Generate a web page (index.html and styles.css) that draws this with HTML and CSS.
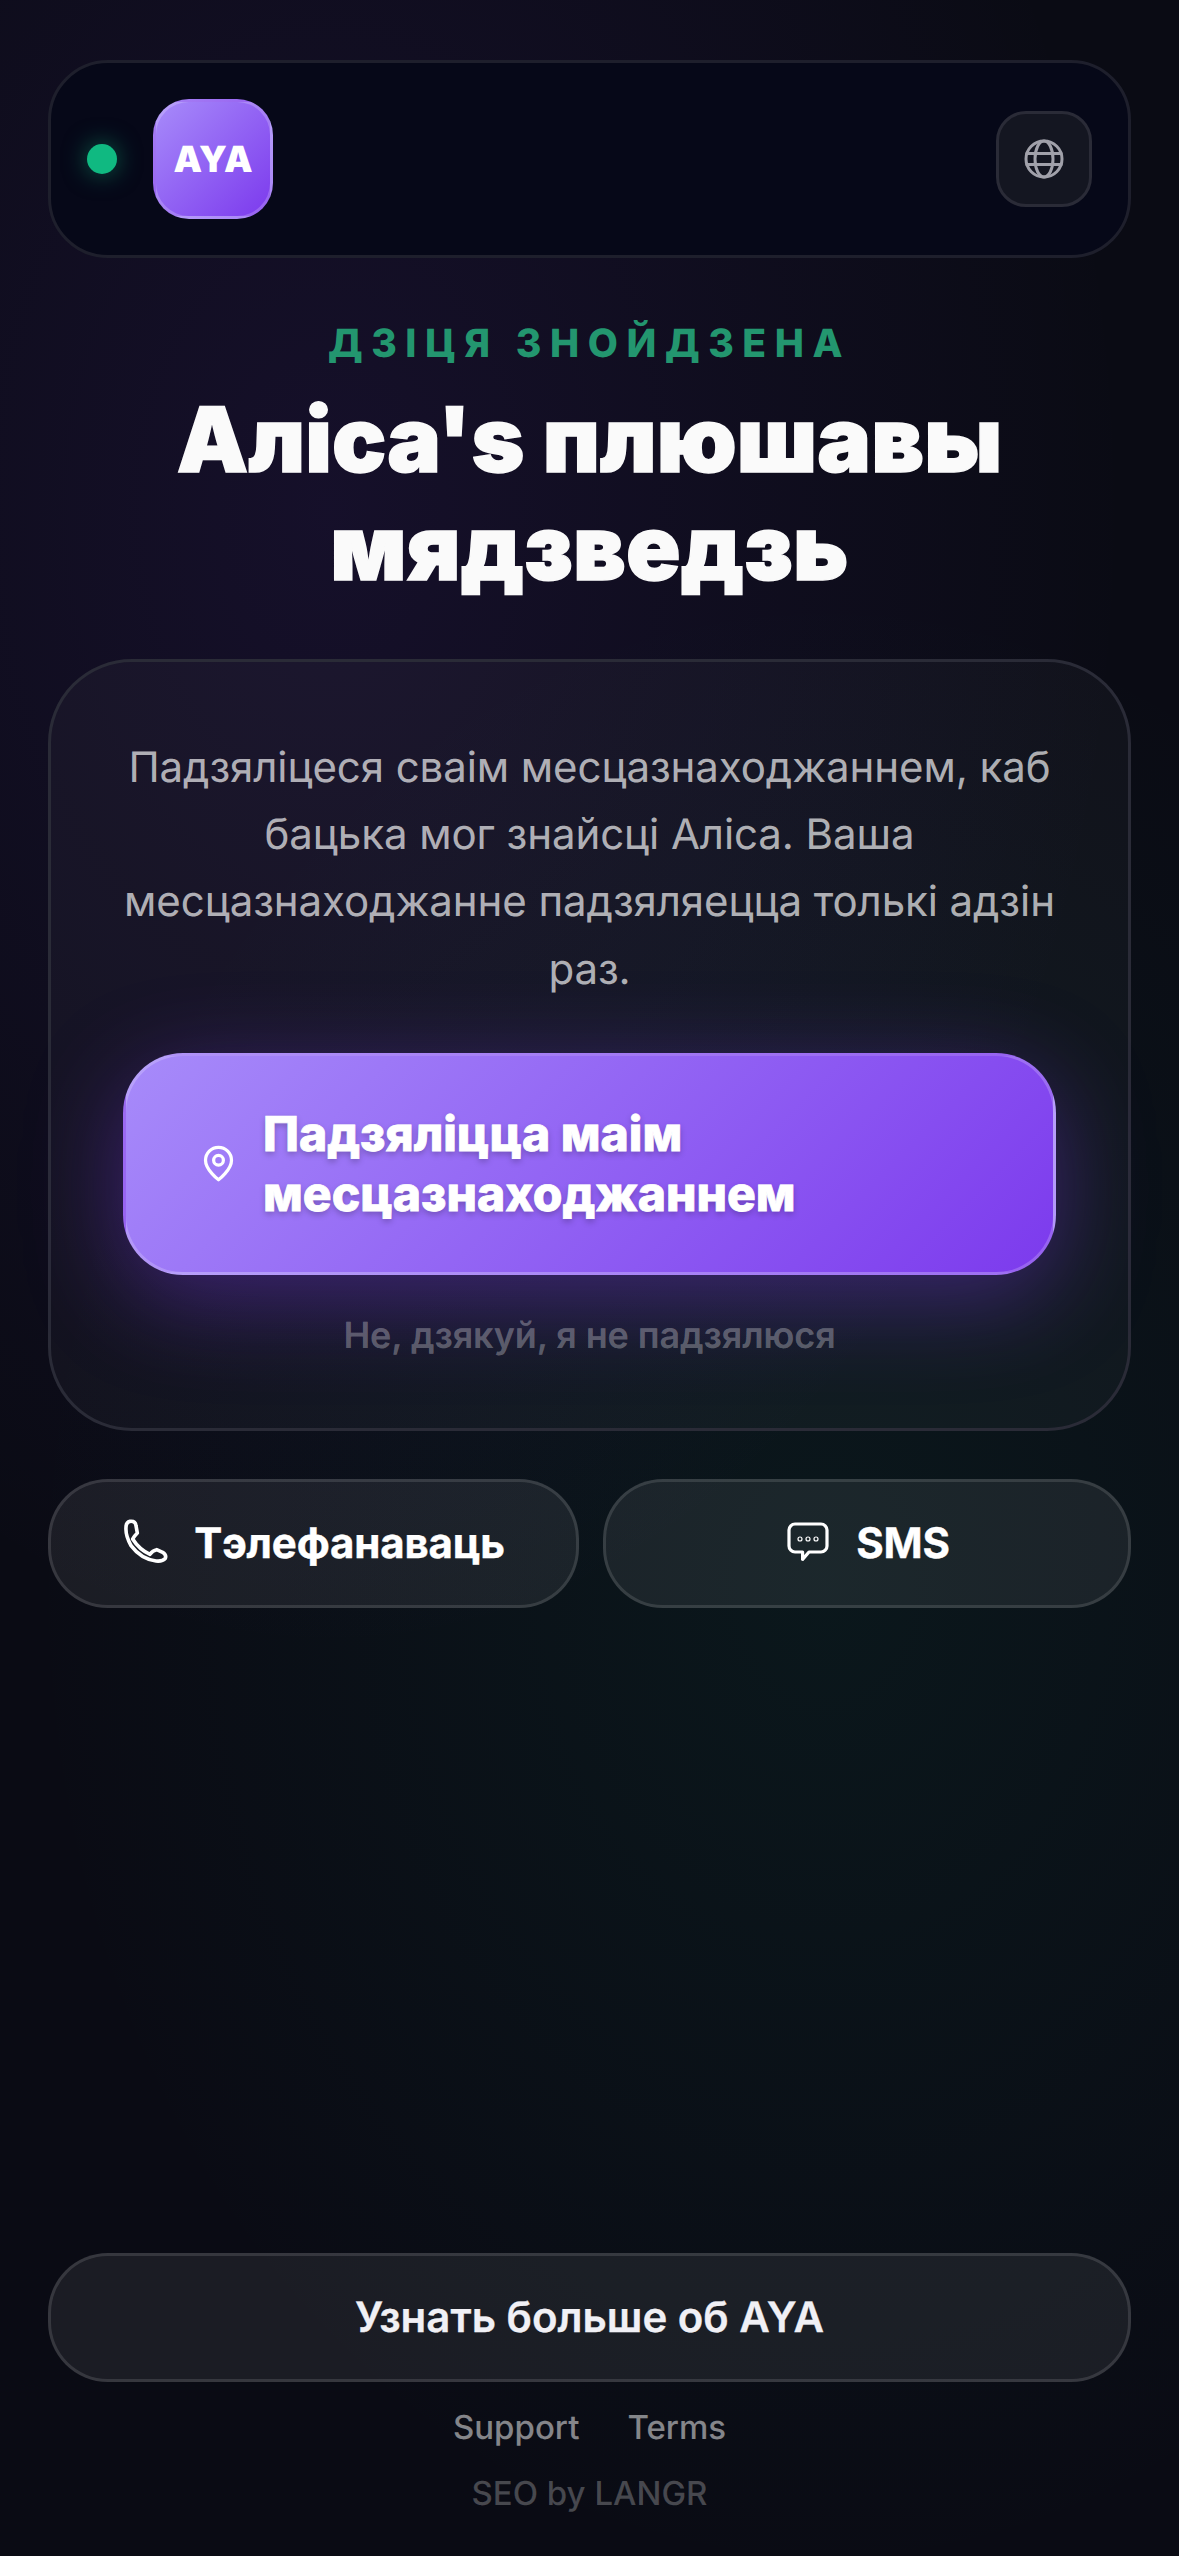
FILE: index.html
```html
<!DOCTYPE html>
<html lang="be">
<head>
    <meta charset="UTF-8">
    <meta name="viewport" content="width=device-width, initial-scale=1.0">
    <title>AYA</title>
    <link rel="stylesheet" href="styles.css">
</head>
<body>
    <div class="page">
        <header class="topbar">
            <div class="brand">
                <span class="status-dot"></span>
                <div class="logo">AYA</div>
            </div>
            <button class="lang-btn" aria-label="Language">
                <svg viewBox="0 0 24 24" class="globe-icon" fill="none" stroke="currentColor" stroke-width="1.5" stroke-linecap="round">
                    <circle cx="12" cy="12" r="9"/>
                    <ellipse cx="12" cy="12" rx="4.5" ry="9"/>
                    <path d="M3.4 9.3h17.2M3.4 14.7h17.2"/>
                </svg>
            </button>
        </header>

        <section class="hero">
            <p class="eyebrow">ДЗІЦЯ ЗНОЙДЗЕНА</p>
            <h1>Аліса's плюшавы мядзведзь</h1>
        </section>

        <section class="card">
            <p class="card-text">Падзяліцеся сваім месцазнаходжаннем, каб бацька мог знайсці Аліса. Ваша месцазнаходжанне падзяляецца толькі адзін раз.</p>
            <button class="share-btn">
                <svg viewBox="0 0 24 24" class="pin-icon" fill="none" stroke="currentColor" stroke-width="2" stroke-linecap="round" stroke-linejoin="round">
                    <path d="M20 10c0 6-8 12-8 12s-8-6-8-12a8 8 0 0 1 16 0Z"/>
                    <circle cx="12" cy="10" r="3"/>
                </svg>
                <span>Падзяліцца маім месцазнаходжаннем</span>
            </button>
            <button class="decline">Не, дзякуй, я не падзялюся</button>
        </section>

        <div class="contact-row">
            <button class="contact-btn">
                <svg viewBox="0 0 24 24" class="contact-icon" fill="none" stroke="currentColor" stroke-width="1.8" stroke-linecap="round" stroke-linejoin="round">
                    <path d="M4 1.17Q6.67.83 7 3.33L7.67 7Q6 8.67 5.33 10Q8.67 15.33 14 17.67Q15.33 15.67 17.33 15.33L20.33 16.67Q22.33 18 21.67 19.67Q20.33 21.33 17 21Q9.5 20 4.5 13.33Q1.67 8.33 2 4.17Q2 1.67 4 1.17Z"/>
                </svg>
                <span>Тэлефанаваць</span>
            </button>
            <button class="contact-btn">
                <svg viewBox="0 0 24 24" class="contact-icon" fill="none" stroke="currentColor" stroke-width="1.6" stroke-linecap="round" stroke-linejoin="round">
                    <path d="M5.5 2.5h13a3 3 0 0 1 3 3v8a3 3 0 0 1-3 3h-6l-3.2 3.7v-3.7H5.5a3 3 0 0 1-3-3v-8a3 3 0 0 1 3-3Z"/>
                    <circle cx="8" cy="10" r="1" stroke-width=".6"/>
                    <circle cx="12" cy="10" r="1" stroke-width=".6"/>
                    <circle cx="16" cy="10" r="1" stroke-width=".6"/>
                </svg>
                <span>SMS</span>
            </button>
        </div>

        <footer class="footer">
            <button class="learn-btn">Узнать больше об AYA</button>
            <nav class="footer-links">
                <a href="#">Support</a>
                <a href="#">Terms</a>
            </nav>
            <p class="credit">SEO by LANGR</p>
        </footer>
    </div>
</body>
</html>
```

FILE: styles.css
```css
* {
    box-sizing: border-box;
}
html, body {
    margin: 0;
    height: 100%;
}
body {
    font-family: 'Inter', 'Noto Sans', sans-serif;
    text-rendering: geometricPrecision;
    background-color: #0a0b14;
    background-image:
        radial-gradient(ellipse 800px 1150px at 28% 20%, rgba(124, 58, 237, 0.1), transparent 100%),
        radial-gradient(ellipse 800px 1000px at 70% 62%, rgba(16, 185, 129, 0.07), transparent 100%);
    color: #fff;
}
button {
    font-family: inherit;
    text-rendering: inherit;
    cursor: pointer;
}
.page {
    min-height: 2556px;
    display: flex;
    flex-direction: column;
    padding: 60px 48px 42px;
}
.topbar {
    display: flex;
    justify-content: space-between;
    align-items: center;
    height: 198px;
    padding: 0 36px;
    background-color: #060818;
    border: 3px solid #1e1f2c;
    border-radius: 60px;
}
.brand {
    display: flex;
    align-items: center;
    gap: 36px;
}
.status-dot {
    width: 30px;
    height: 30px;
    border-radius: 50%;
    background-color: #10b981;
    box-shadow: 0 0 24px rgba(16, 185, 129, 0.5);
}
.logo {
    width: 120px;
    height: 120px;
    display: flex;
    align-items: center;
    justify-content: center;
    border: 3px solid rgba(255, 255, 255, 0.2);
    border-radius: 36px;
    background: linear-gradient(135deg, #a78bfa, #7c3aed);
    font-size: 36px;
    font-weight: 900;
}
.lang-btn {
    width: 96px;
    height: 96px;
    display: flex;
    align-items: center;
    justify-content: center;
    padding: 0;
    color: #a1a1aa;
    background-color: #141621;
    border: 3px solid #2a2b37;
    border-radius: 30px;
}
.globe-icon {
    width: 48px;
    height: 48px;
}
.hero {
    margin-top: 62px;
    text-align: center;
}
.eyebrow {
    margin: 0;
    font-size: 39px;
    line-height: 48px;
    font-weight: 800;
    letter-spacing: 0.22em;
    color: #23966f;
}
.hero h1 {
    margin: 18px 0 0;
    font-size: 90px;
    line-height: 108px;
    font-weight: 900;
    letter-spacing: 0.2px;
    -webkit-text-stroke: 1.5px #fafafa;
    color: #fafafa;
}
.card {
    margin-top: 57px;
    padding: 72px 72px 69px;
    background-color: rgba(255, 255, 255, 0.03);
    border: 3px solid #2a2b37;
    border-radius: 84px;
    text-align: center;
}
.card-text {
    margin: 0;
    font-size: 42px;
    line-height: 67.2px;
    letter-spacing: -0.08px;
    color: rgba(255, 255, 255, 0.68);
}
.share-btn {
    width: 100%;
    display: flex;
    align-items: center;
    gap: 25px;
    margin-top: 50px;
    padding: 48px 73px;
    text-align: left;
    color: #fff;
    background: linear-gradient(135deg, #a78bfa, #7c3aed);
    border: 3px solid rgba(255, 255, 255, 0.2);
    border-radius: 60px;
    box-shadow: 0 24px 96px rgba(124, 58, 237, 0.4);
    font-size: 48px;
    line-height: 60px;
    font-weight: 800;
    -webkit-text-stroke: 0.8px #fff;
    text-shadow: 0 3px 6px rgba(0, 0, 0, 0.25);
}
.pin-icon {
    flex: none;
    width: 39px;
    height: 39px;
}
.decline {
    margin-top: 36px;
    padding: 0;
    background: none;
    border: none;
    font-size: 36px;
    line-height: 48px;
    font-weight: 600;
    letter-spacing: -0.1px;
    color: rgba(255, 255, 255, 0.3);
}
.contact-row {
    display: grid;
    grid-template-columns: 1.006fr 1fr;
    gap: 24px;
    margin-top: 48px;
}
.contact-btn {
    height: 129px;
    display: flex;
    align-items: center;
    justify-content: center;
    gap: 24px;
    color: #fff;
    background-color: rgba(255, 255, 255, 0.07);
    border: 3px solid rgba(255, 255, 255, 0.12);
    border-radius: 60px;
    font-size: 42px;
    font-weight: 700;
    letter-spacing: -0.15px;
    -webkit-text-stroke: 0.4px #fff;
}
.contact-icon {
    flex: none;
    width: 48px;
    height: 48px;
}
.footer {
    margin-top: auto;
    display: flex;
    flex-direction: column;
    align-items: center;
}
.learn-btn {
    width: 100%;
    height: 129px;
    color: #f0f0f5;
    background-color: rgba(255, 255, 255, 0.07);
    border: 3px solid rgba(255, 255, 255, 0.12);
    border-radius: 60px;
    font-size: 42px;
    font-weight: 600;
    -webkit-text-stroke: 0.3px #f0f0f5;
}
.footer-links {
    display: flex;
    gap: 48px;
    margin-top: 21px;
}
.footer-links a {
    font-size: 33px;
    line-height: 48px;
    font-weight: 500;
    color: rgba(255, 255, 255, 0.5);
    text-decoration: none;
}
.credit {
    margin: 21px 0 0;
    font-size: 33px;
    line-height: 42px;
    font-weight: 500;
    color: rgba(255, 255, 255, 0.25);
}
```
